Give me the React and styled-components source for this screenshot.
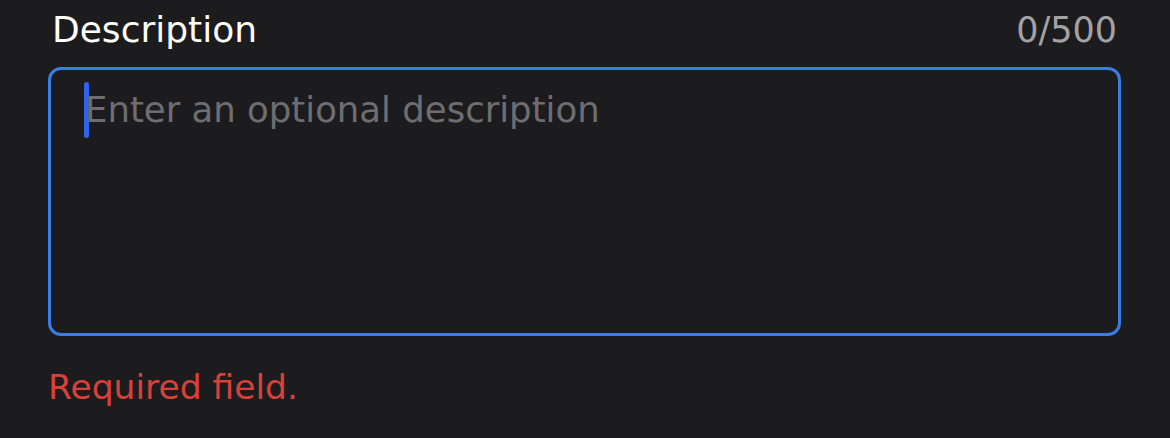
import styled, { createGlobalStyle } from "styled-components";

const GlobalStyle = createGlobalStyle`
  html, body {
    margin: 0;
    padding: 0;
    background-color: #1c1c1e;
  }
  body {
    font-family: "DejaVu Sans", "Open Sans", sans-serif;
  }
`;

const Field = styled.section`
  display: flex;
  flex-direction: column;
  width: 1170px;
  height: 438px;
  box-sizing: border-box;
  padding: 6px 49px 0 48px;
`;

const Header = styled.div`
  display: flex;
  justify-content: space-between;
  align-items: baseline;
  padding: 0 4px 0 4px;
  height: 55px;
`;

const Label = styled.label`
  color: #ffffff;
  font-size: 36px;
  line-height: 48px;
`;

const Counter = styled.span`
  color: #a3a3a6;
  font-size: 35px;
  line-height: 48px;
`;

const Box = styled.div`
  margin-top: 6px;
  height: 269px;
  box-sizing: border-box;
  border: 3px solid #3b7de2;
  border-radius: 13px;
  padding: 12px 0 0 33px;
  display: flex;
  align-items: flex-start;
`;

const Caret = styled.span`
  display: block;
  width: 5px;
  height: 56px;
  border-radius: 3px;
  background-color: #2f64f0;
  flex-shrink: 0;
`;

const Placeholder = styled.span`
  margin-left: -4px;
  color: #6e6e72;
  font-size: 35.5px;
  line-height: 56px;
`;

const Error = styled.p`
  margin: 27px 0 0 0;
  color: #d8413a;
  font-size: 34.5px;
  line-height: 48px;
`;

const App = () => {
  return (
    <>
      <GlobalStyle />
      <Field>
        <Header>
          <Label>Description</Label>
          <Counter>0/500</Counter>
        </Header>
        <Box>
          <Caret />
          <Placeholder>Enter an optional description</Placeholder>
        </Box>
        <Error>Required field.</Error>
      </Field>
    </>
  );
};

export default App;
